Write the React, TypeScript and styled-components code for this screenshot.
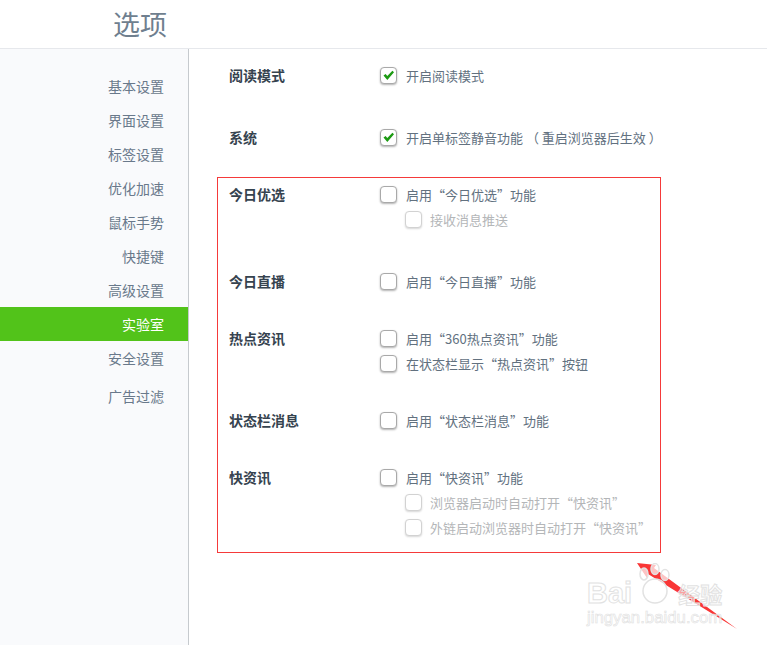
import React from 'react'
import styled, { createGlobalStyle } from 'styled-components'

const GlobalStyle = createGlobalStyle`
  html, body {
    margin: 0;
    padding: 0;
    background: #ffffff;
    font-family: "Noto Sans CJK SC", "Liberation Sans", sans-serif;
  }
`

const Page = styled.div`
  position: relative;
  width: 767px;
  height: 645px;
  overflow: hidden;
  display: flex;
  flex-direction: column;
`
const Header = styled.div`
  height: 48px;
  flex: none;
  padding-left: 113px;
  border-bottom: 1px solid #e6e8ec;
`
const Title = styled.div`
  font-size: 27px;
  line-height: 48px;
  color: #6f7f8f;
`
const Body = styled.div`
  flex: 1;
  display: flex;
`
const Sidebar = styled.div`
  width: 188px;
  flex: none;
  padding-top: 20px;
  background: #f9fafc;
  border-right: 1px solid #c6cace;
`
const NavItem = styled.div<{ $active?: boolean; $mt?: string }>`
  height: 34px;
  line-height: 34px;
  margin-top: ${props => props.$mt || '0'};
  padding-right: 24px;
  text-align: right;
  font-size: 14px;
  color: ${props => (props.$active ? '#ffffff' : '#69798b')};
  background: ${props => (props.$active ? '#52c31a' : 'transparent')};
`
const Main = styled.div`
  flex: 1;
  padding: 14px 0 0 28px;
`
const PlainGroup = styled.div`
  padding-left: 12px;
  margin-bottom: 27px;
`
const RedBox = styled.div`
  width: 444px;
  box-sizing: border-box;
  padding: 4px 0 12px 11px;
  border: 1px solid #f53a3a;
`
const Section = styled.div<{ $mb?: string }>`
  display: grid;
  grid-template-columns: 151px 1fr;
  margin-bottom: ${props => props.$mb || '32px'};
`
const Label = styled.div`
  font-size: 14px;
  font-weight: 700;
  line-height: 25px;
  color: #36434f;
`
const Option = styled.div<{ $sub?: boolean }>`
  height: 25px;
  display: flex;
  align-items: center;
  gap: ${props => (props.$sub ? '8px' : '9px')};
  padding-left: ${props => (props.$sub ? '25px' : '0')};
  font-size: 13px;
  white-space: nowrap;
  color: ${props => (props.$sub ? '#b4b6b8' : '#62717f')};
`
const Box = styled.span<{ $sub?: boolean }>`
  width: 17px;
  height: 17px;
  flex: none;
  box-sizing: border-box;
  display: flex;
  align-items: center;
  justify-content: center;
  background: #ffffff;
  border: 1px solid ${props => (props.$sub ? '#d2d2d2' : '#a9a9a9')};
  border-radius: 4px;
  box-shadow: 0 1px 2px rgba(0, 0, 0, ${props => (props.$sub ? '.16' : '.3')});
`
const Arrow = styled.svg`
  position: absolute;
  left: 630px;
  top: 555px;
`
const Watermark = styled.div`
  position: absolute;
  left: 587px;
  top: 563px;
  width: 150px;
  color: rgba(255, 255, 255, 0.55);
  -webkit-text-stroke: 1px #e2e2e2;
  font-family: "Liberation Sans", sans-serif;
`
const MarkTop = styled.div`
  display: flex;
  align-items: flex-end;
  height: 42px;
  font-size: 29px;
  font-weight: 700;
  line-height: 24px;
`
const MarkPaw = styled.svg`
  margin-left: 3px;
  flex: none;
`
const MarkCn = styled.span`
  margin-left: 3px;
  font-family: "Noto Sans CJK SC", sans-serif;
  font-size: 22px;
  line-height: 24px;
`
const MarkSmall = styled.div`
  margin-top: 1px;
  font-size: 16.8px;
  line-height: 24px;
  -webkit-text-stroke: 0.6px #e0e0e0;
  white-space: nowrap;
`

const Check = () => (
  <svg width="13" height="11" viewBox="0 0 13 11">
    <path d="M1.5 5.6 L3.6 3.9 L5.3 6 L10.4 .8 L12 2.3 L5.3 10 Z" fill="#1c9a12" />
  </svg>
)

const Opt = ({ text, checked, sub }: { text: string; checked?: boolean; sub?: boolean }) => (
  <Option $sub={sub}>
    <Box $sub={sub}>{checked && <Check />}</Box>
    <span>{text}</span>
  </Option>
)

const navItems = ['基本设置', '界面设置', '标签设置', '优化加速', '鼠标手势', '快捷键', '高级设置', '实验室', '安全设置']

export default function App() {
  return (
    <Page>
      <GlobalStyle />
      <Header>
        <Title>选项</Title>
      </Header>
      <Body>
        <Sidebar>
          {navItems.map(item => (
            <NavItem key={item} $active={item === '实验室'}>{item}</NavItem>
          ))}
          <NavItem $mt="4px">广告过滤</NavItem>
        </Sidebar>
        <Main>
          <PlainGroup>
            <Section $mb="37px">
              <Label>阅读模式</Label>
              <div><Opt checked text="开启阅读模式" /></div>
            </Section>
            <Section $mb="0">
              <Label>系统</Label>
              <div><Opt checked text="开启单标签静音功能 （ 重启浏览器后生效 ）" /></div>
            </Section>
          </PlainGroup>
          <RedBox>
            <Section $mb="37px">
              <Label>今日优选</Label>
              <div>
                <Opt text="启用“今日优选”功能" />
                <Opt sub text="接收消息推送" />
              </div>
            </Section>
            <Section>
              <Label>今日直播</Label>
              <div><Opt text="启用“今日直播”功能" /></div>
            </Section>
            <Section>
              <Label>热点资讯</Label>
              <div>
                <Opt text="启用“360热点资讯”功能" />
                <Opt text="在状态栏显示“热点资讯”按钮" />
              </div>
            </Section>
            <Section>
              <Label>状态栏消息</Label>
              <div><Opt text="启用“状态栏消息”功能" /></div>
            </Section>
            <Section $mb="0">
              <Label>快资讯</Label>
              <div>
                <Opt text="启用“快资讯”功能" />
                <Opt sub text="浏览器启动时自动打开“快资讯”" />
                <Opt sub text="外链启动浏览器时自动打开“快资讯”" />
              </div>
            </Section>
          </RedBox>
        </Main>
      </Body>
      <Arrow width="112" height="80" viewBox="630 555 112 80">
        <polygon points="637,563 656,565 654,568 737,629 648,574 647,578" fill="#f93636" />
      </Arrow>
      <Watermark>
        <MarkTop>
          Bai
          <MarkPaw width="40" height="42" viewBox="0 0 40 42">
            <g fill="rgba(255,255,255,.7)" stroke="#e2e2e2" strokeWidth="1.5">
              <ellipse cx="9" cy="11" rx="4" ry="6" />
              <ellipse cx="20" cy="6" rx="4" ry="5.5" />
              <ellipse cx="30" cy="12" rx="4" ry="5.5" />
              <circle cx="20" cy="28" r="12" />
            </g>
          </MarkPaw>
          <MarkCn>经验</MarkCn>
        </MarkTop>
        <MarkSmall>jingyan.baidu.com</MarkSmall>
      </Watermark>
    </Page>
  )
}
